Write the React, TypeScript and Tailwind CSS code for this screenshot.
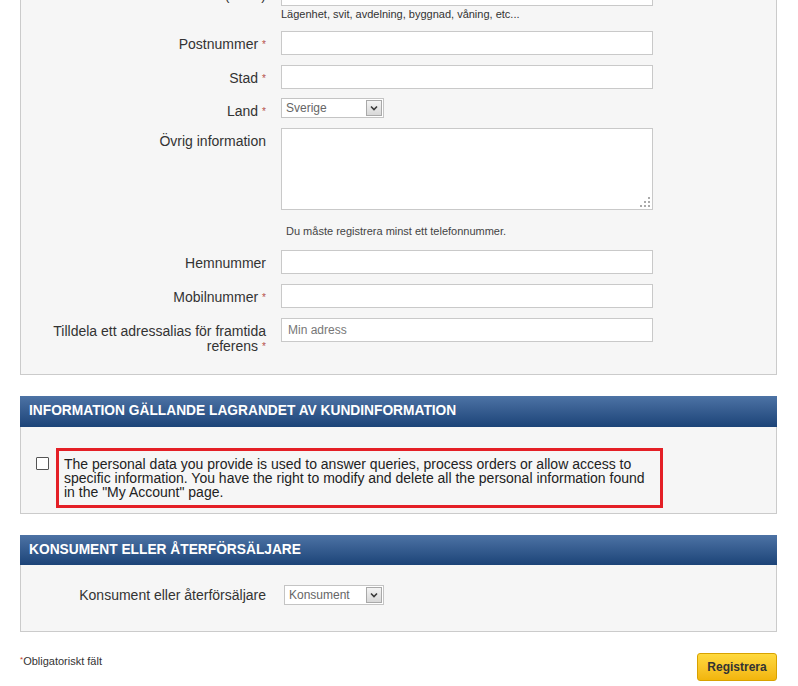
import type { ReactNode } from "react";

function Req() {
  return <span className="ml-[4px] align-[1px] text-[10px] text-[#b5504a]">*</span>;
}

function Row({ label, required, children, className = "" }: { label: string; required?: boolean; children: ReactNode; className?: string }) {
  return (
    <div className={`flex ${className}`}>
      <div className="w-[226px] shrink-0 pt-[6px] text-right text-[14px] leading-[15px] text-[#333]">
        {label}
        {required && <Req />}
      </div>
      <div className="ml-[15px]">{children}</div>
    </div>
  );
}

function TextInput({ placeholder }: { placeholder?: string }) {
  return (
    <div className="flex h-[24px] w-[372px] items-center border border-[#c9c9c9] bg-white pl-[6px] text-[12px] text-[#777]">
      {placeholder}
    </div>
  );
}

function FakeSelect({ value, width }: { value: string; width: string }) {
  return (
    <div className={`flex h-[20px] items-center justify-between border border-[#c4c4c4] bg-white pl-[4px] pr-[1px] text-[12px] text-[#666] ${width}`}>
      <span>{value}</span>
      <span className="flex h-[16px] w-[16px] items-center justify-center border border-[#a9a9a9] bg-linear-to-b from-[#f4f4f4] to-[#d8d8d8]">
        <svg width="8" height="6" viewBox="0 0 8 6">
          <path d="M1 1.5 L4 4.5 L7 1.5" fill="none" stroke="#3a3a3a" strokeWidth="1.6" />
        </svg>
      </span>
    </div>
  );
}

function SectionHeader({ title, h }: { title: string; h: string }) {
  return (
    <div className={`flex items-center bg-linear-to-b from-[#4d73a5] to-[#1c4478] pl-[9px] text-[13.75px] font-bold text-white ${h}`}>
      {title}
    </div>
  );
}

export default function App() {
  return (
    <div className="h-[686px] overflow-hidden bg-white font-['Liberation_Sans',Arial,sans-serif]">
      <div className="ml-[20px] w-[757px]">
        <div className="-mt-[34px] border border-[#cbcbcb] bg-[#f6f6f6] pb-[20px] pl-[19px] pt-[15px]">
          <div className="flex flex-col gap-[10px]">
            <Row label="Adress (rad 2)">
              <TextInput />
              <div className="mt-[2px] text-[11px] leading-[13px] text-[#333]">
                Lägenhet, svit, avdelning, byggnad, våning, etc...
              </div>
            </Row>
            <Row label="Postnummer" required>
              <TextInput />
            </Row>
            <Row label="Stad" required>
              <TextInput />
            </Row>
            <Row label="Land" required className="-mt-[1px] h-[20px]">
              <FakeSelect value="Sverige" width="w-[103px]" />
            </Row>
            <Row label="Övrig information">
              <div className="relative h-[82px] w-[372px] border border-[#c9c9c9] bg-white">
                <svg className="absolute bottom-[2px] right-[2px]" width="10" height="10" viewBox="0 0 10 10">
                  <rect x="8" y="0" width="2" height="2" fill="#aaa" />
                  <rect x="4" y="4" width="2" height="2" fill="#aaa" />
                  <rect x="8" y="4" width="2" height="2" fill="#aaa" />
                  <rect x="0" y="8" width="2" height="2" fill="#aaa" />
                  <rect x="4" y="8" width="2" height="2" fill="#aaa" />
                  <rect x="8" y="8" width="2" height="2" fill="#aaa" />
                </svg>
              </div>
            </Row>
            <div className="h-[20px] pl-[246px] pt-[5px] text-[11px] leading-[13px] text-[#444]">
              Du måste registrera minst ett telefonnummer.
            </div>
            <Row label="Hemnummer">
              <TextInput />
            </Row>
            <Row label="Mobilnummer" required>
              <TextInput />
            </Row>
            <Row label="Tilldela ett adressalias för framtida referens" required>
              <TextInput placeholder="Min adress" />
            </Row>
          </div>
        </div>

        <div className="mt-[21px]">
          <SectionHeader title="INFORMATION GÄLLANDE LAGRANDET AV KUNDINFORMATION" h="h-[31px]" />
          <div className="flex border-x border-b border-[#cbcbcb] bg-[#f6f6f6] pb-[5px] pl-[15px] pt-[21px]">
            <div className="mt-[9px] h-[13px] w-[13px] shrink-0 rounded-[1px] border border-[#555] bg-white" />
            <div className="ml-[7px] w-[607px] border-[3px] border-[#e41f26] pb-[6px] pl-[5px] pr-[3px] pt-[6px] text-[14px] leading-[14px] text-[#222]">
              The personal data you provide is used to answer queries, process orders or allow access to specific
              information. You have the right to modify and delete all the personal information found in the "My
              Account" page.
            </div>
          </div>
        </div>

        <div className="mt-[21px]">
          <SectionHeader title="KONSUMENT ELLER ÅTERFÖRSÄLJARE" h="h-[30px]" />
          <div className="flex items-center border-x border-b border-[#cbcbcb] bg-[#f6f6f6] pb-[26px] pl-[19px] pt-[20px]">
            <div className="w-[226px] text-right text-[14px] leading-[15px] text-[#333]">
              Konsument eller återförsäljare
            </div>
            <div className="ml-[18px]">
              <FakeSelect value="Konsument" width="w-[100px]" />
            </div>
          </div>
        </div>

        <div className="mt-[21px] flex items-start justify-between">
          <div className="text-[11px] leading-[13px] text-[#333]">
            <span className="align-[3px] text-[8px] text-[#c0392b]">*</span>
            Obligatoriskt fält
          </div>
          <button className="h-[28px] w-[80px] rounded-[3px] border border-[#d8a200] bg-linear-to-b from-[#ffd93d] to-[#f2b50a] text-[12px] font-bold text-[#333]">
            Registrera
          </button>
        </div>
      </div>
    </div>
  );
}
